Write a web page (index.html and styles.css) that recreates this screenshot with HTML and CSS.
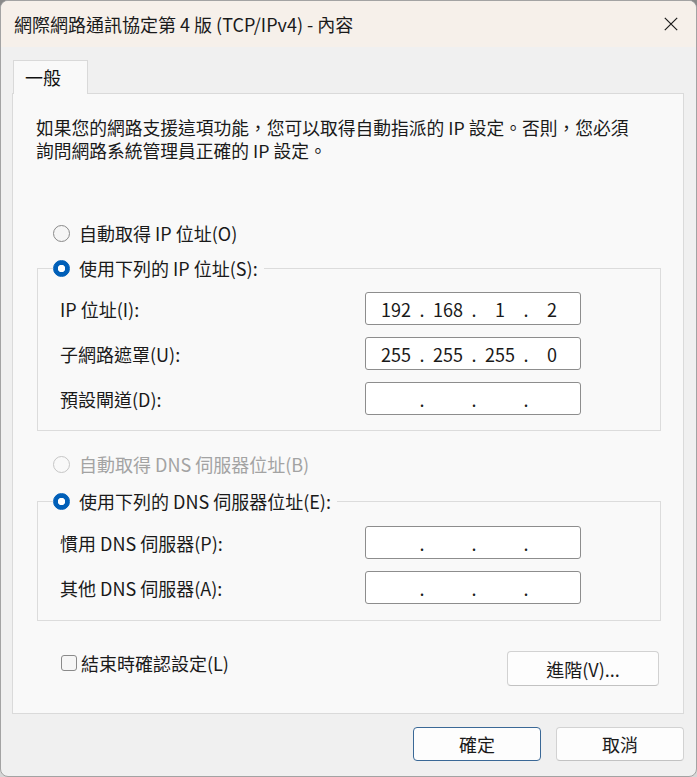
FILE: index.html
```html
<!DOCTYPE html>
<html lang="zh-Hant">
<head>
<meta charset="utf-8">
<title>網際網路通訊協定第 4 版 (TCP/IPv4) - 內容</title>
<link rel="stylesheet" href="styles.css">
</head>
<body>
<div class="window">
  <div class="titlebar">
    <span class="title">網際網路通訊協定第 4 版 (TCP/IPv4) - 內容</span>
    <svg class="close" width="14" height="14" viewBox="0 0 14 14"><path d="M0.8 0.8 L13.2 13.2 M13.2 0.8 L0.8 13.2" stroke="#1b1b1b" stroke-width="1.2" fill="none"/></svg>
  </div>
  <div class="client">
    <div class="tabs"><div class="tab">一般</div></div>
    <div class="panel">
      <p class="intro"><span class="line">如果您的網路支援這項功能，您可以取得自動指派的 IP 設定。否則，您必須</span><span class="line">詢問網路系統管理員正確的 IP 設定。</span></p>
      <div class="section">
        <div class="radio-row first"><span class="radio"></span><span>自動取得 IP 位址(O)</span></div>
        <fieldset class="group">
          <legend><span class="radio-row"><span class="radio checked"></span><span>使用下列的 IP 位址(S):</span></span></legend>
          <div class="fields">
            <span class="flabel">IP 位址(I):</span>
            <div class="ipbox"><span class="seg">192</span><span class="dot">.</span><span class="seg">168</span><span class="dot">.</span><span class="seg">1</span><span class="dot">.</span><span class="seg">2</span></div>
            <span class="flabel">子網路遮罩(U):</span>
            <div class="ipbox"><span class="seg">255</span><span class="dot">.</span><span class="seg">255</span><span class="dot">.</span><span class="seg">255</span><span class="dot">.</span><span class="seg">0</span></div>
            <span class="flabel">預設閘道(D):</span>
            <div class="ipbox"><span class="seg"></span><span class="dot">.</span><span class="seg"></span><span class="dot">.</span><span class="seg"></span><span class="dot">.</span><span class="seg"></span></div>
          </div>
        </fieldset>
        <div class="radio-row disabled"><span class="radio"></span><span>自動取得 DNS 伺服器位址(B)</span></div>
        <fieldset class="group second">
          <legend><span class="radio-row"><span class="radio checked"></span><span>使用下列的 DNS 伺服器位址(E):</span></span></legend>
          <div class="fields dns">
            <span class="flabel">慣用 DNS 伺服器(P):</span>
            <div class="ipbox"><span class="seg"></span><span class="dot">.</span><span class="seg"></span><span class="dot">.</span><span class="seg"></span><span class="dot">.</span><span class="seg"></span></div>
            <span class="flabel">其他 DNS 伺服器(A):</span>
            <div class="ipbox"><span class="seg"></span><span class="dot">.</span><span class="seg"></span><span class="dot">.</span><span class="seg"></span><span class="dot">.</span><span class="seg"></span></div>
          </div>
        </fieldset>
        <div class="bottom-row">
          <div class="check-row"><span class="checkbox"></span><span>結束時確認設定(L)</span></div>
          <button class="btn advanced">進階(V)...</button>
        </div>
      </div>
    </div>
    <div class="footer">
      <button class="btn action default">確定</button>
      <button class="btn action">取消</button>
    </div>
  </div>
</div>
</body>
</html>
```

FILE: styles.css
```css
* { box-sizing: border-box; }
html, body { margin: 0; padding: 0; }
body {
  width: 697px;
  height: 777px;
  background: linear-gradient(#8a8a8a, #8a8a8a 60px, #d6d6d6 700px);
  font-family: "Noto Sans CJK TC", "Noto Sans", sans-serif;
  color: #111;
  overflow: hidden;
}
.window {
  width: 697px;
  height: 777px;
  border: 1px solid #a3a3a3;
  border-radius: 8px;
  overflow: hidden;
  background: #f0f0f0;
}
.titlebar {
  height: 46px;
  background: #f6f0ea;
  display: flex;
  align-items: center;
  justify-content: space-between;
  padding: 0 18px 0 13px;
}
.title {
  font-size: 18px;
  color: #1a1a1a;
  white-space: nowrap;
  margin-top: -1px;
}
.close { display: block; }
.client {
  padding: 13px 12px 0 11px;
}
.tabs { display: flex; }
.tab {
  width: 75px;
  height: 34px;
  margin-left: 1px;
  margin-bottom: -1px;
  border: 1px solid #d9d9d9;
  border-bottom: none;
  background: #f9f9f9;
  position: relative;
  z-index: 1;
  font-size: 18px;
  line-height: 32px;
  padding-left: 11px;
}
.panel {
  border: 1px solid #dadada;
  background: #f9f9f9;
  padding: 22px 22px 27px 23px;
}
.intro {
  margin: 0;
  font-size: 17.75px;
  white-space: nowrap;
  color: #1a1a1a;
  display: flex;
  flex-direction: column;
}
.intro .line {
  display: block;
  height: 23px;
  line-height: 23px;
}
.section { margin-left: 1px; }
.radio-row {
  display: flex;
  align-items: center;
  gap: 9px;
  height: 24px;
  font-size: 18px;
  white-space: nowrap;
  color: #1a1a1a;
}
.radio-row.first {
  margin-top: 59px;
  padding-left: 16px;
}
.radio {
  width: 17px;
  height: 17px;
  border-radius: 50%;
  border: 1px solid #8a8a8a;
  background: #f5f5f5;
  flex: none;
}
.radio.checked {
  border-color: #005fb8;
  background: radial-gradient(circle, #ffffff 0 3.4px, #005fb8 4px);
}
.radio-row.disabled {
  color: #a3a3a3;
  margin-top: 21px;
  padding-left: 16px;
}
.radio-row.disabled .radio {
  border-color: #c6c6c6;
  background: #f9f9f9;
}
.group {
  margin: 11px 0 0 0;
  padding: 0;
  border: 1px solid #dcdcdc;
  min-width: 0;
}
.group.second { margin-top: 13px; }
.group legend {
  padding: 0 6px 0 0;
  margin-left: 15px;
}
.fields {
  display: grid;
  grid-template-columns: 1fr 216px;
  row-gap: 12px;
  align-items: center;
  padding: 12px 79px 15px 22px;
}
.fields.dns { padding-top: 13px; padding-bottom: 16px; }
.flabel {
  font-size: 18px;
  white-space: nowrap;
  color: #1a1a1a;
}
.ipbox {
  height: 33px;
  border: 1px solid #8d8d8d;
  border-radius: 3px;
  background: #ffffff;
  display: flex;
  align-items: center;
  padding-left: 8px;
  font-size: 18px;
  color: #1a1a1a;
}
.seg {
  width: 44px;
  text-align: center;
}
.dot {
  width: 8px;
  text-align: center;
}
.bottom-row {
  margin-top: 30px;
  display: flex;
  justify-content: space-between;
  align-items: flex-start;
  padding-left: 24px;
  margin-right: 2px;
}
.check-row {
  display: flex;
  align-items: center;
  gap: 4px;
  height: 18px;
  margin-top: 3px;
  font-size: 18px;
  white-space: nowrap;
  color: #1a1a1a;
}
.checkbox {
  width: 16px;
  height: 16px;
  border: 1px solid #8a8a8a;
  border-radius: 3px;
  background: #f6f6f6;
  flex: none;
}
.btn {
  font-family: "Noto Sans CJK TC", "Noto Sans", sans-serif;
  font-size: 18px;
  color: #1a1a1a;
  background: #fdfdfd;
  border: 1px solid #d2d2d2;
  border-bottom-color: #c2c2c2;
  border-radius: 4px;
  height: 35px;
  padding: 0;
}
.advanced { width: 152px; }
.footer {
  display: flex;
  justify-content: flex-end;
  gap: 15px;
  padding-top: 13px;
}
.action { width: 128px; height: 34px; }
.action.default {
  border: 1px solid #3a6896;
}
```
